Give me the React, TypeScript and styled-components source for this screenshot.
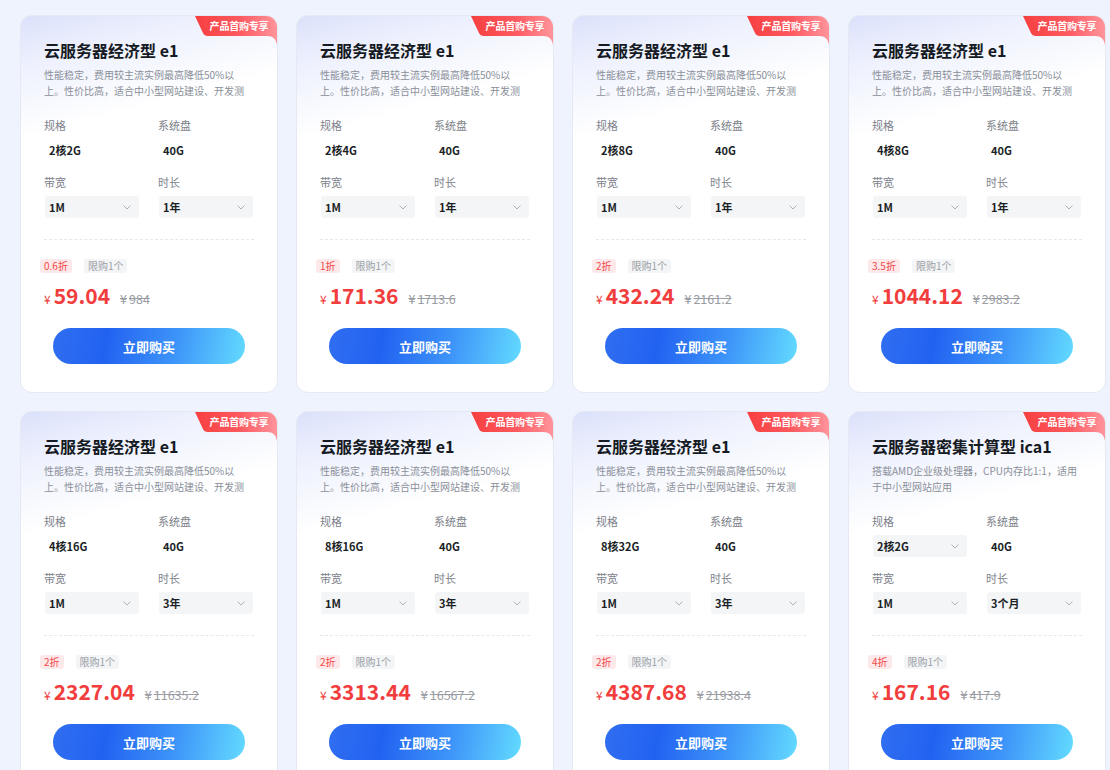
import React from "react";
import styled, { createGlobalStyle } from "styled-components";

const GlobalStyle = createGlobalStyle`
  html, body { margin: 0; padding: 0; }
  body {
    background: #eef3fd;
    font-family: "Noto Sans CJK SC", "Noto Sans", sans-serif;
    -webkit-font-smoothing: antialiased;
  }
`;

type Product = {
  title: string;
  desc: string;
  spec: string;
  specSelect?: boolean;
  disk: string;
  bw: string;
  dur: string;
  discount: string;
  price: string;
  orig: string;
};

const E1_DESC =
  "性能稳定，费用较主流实例最高降低50%以上。性价比高，适合中小型网站建设、开发测";

const products: Product[] = [
  { title: "云服务器经济型 e1", desc: E1_DESC, spec: "2核2G", disk: "40G", bw: "1M", dur: "1年", discount: "0.6折", price: "59.04", orig: "984" },
  { title: "云服务器经济型 e1", desc: E1_DESC, spec: "2核4G", disk: "40G", bw: "1M", dur: "1年", discount: "1折", price: "171.36", orig: "1713.6" },
  { title: "云服务器经济型 e1", desc: E1_DESC, spec: "2核8G", disk: "40G", bw: "1M", dur: "1年", discount: "2折", price: "432.24", orig: "2161.2" },
  { title: "云服务器经济型 e1", desc: E1_DESC, spec: "4核8G", disk: "40G", bw: "1M", dur: "1年", discount: "3.5折", price: "1044.12", orig: "2983.2" },
  { title: "云服务器经济型 e1", desc: E1_DESC, spec: "4核16G", disk: "40G", bw: "1M", dur: "3年", discount: "2折", price: "2327.04", orig: "11635.2" },
  { title: "云服务器经济型 e1", desc: E1_DESC, spec: "8核16G", disk: "40G", bw: "1M", dur: "3年", discount: "2折", price: "3313.44", orig: "16567.2" },
  { title: "云服务器经济型 e1", desc: E1_DESC, spec: "8核32G", disk: "40G", bw: "1M", dur: "3年", discount: "2折", price: "4387.68", orig: "21938.4" },
  {
    title: "云服务器密集计算型 ica1",
    desc: "搭载AMD企业级处理器，CPU内存比1:1，适用于中小型网站应用",
    spec: "2核2G",
    specSelect: true,
    disk: "40G",
    bw: "1M",
    dur: "3个月",
    discount: "4折",
    price: "167.16",
    orig: "417.9",
  },
];

const Page = styled.div`
  padding: 15px 0 0 20px;
  display: grid;
  grid-template-columns: repeat(4, 258px);
  column-gap: 18px;
  row-gap: 18px;
`;

const Card = styled.div`
  position: relative;
  overflow: hidden;
  box-sizing: border-box;
  border: 1px solid #e4e9f3;
  border-radius: 12px;
  background: linear-gradient(165deg, #dbe1fb 0px, #eef1fd 50px, #ffffff 120px);
  padding: 23px 23px 28px 23px;
  display: flex;
  flex-direction: column;
`;

const Badge = styled.div`
  position: absolute;
  top: 0;
  right: 0;
  width: 82px;
  height: 29px;
`;

const BadgeText = styled.span`
  position: absolute;
  top: 0;
  left: 6px;
  right: 0;
  height: 20px;
  line-height: 20px;
  text-align: center;
  color: #fff;
  font-size: 10px;
  font-weight: 700;
  letter-spacing: -0.2px;
`;

const Title = styled.div`
  font-size: 16px;
  line-height: 22px;
  font-weight: 700;
  color: #151a23;
  white-space: nowrap;
`;

const Desc = styled.div`
  margin-top: 6px;
  width: 208px;
  font-size: 10px;
  line-height: 16px;
  height: 32px;
  color: #8a8f99;
`;

const SpecGrid = styled.div`
  margin-top: 18px;
  display: grid;
  grid-template-columns: 95px 95px;
  column-gap: 19px;
  row-gap: 13px;
`;

const Field = styled.div`
  display: flex;
  flex-direction: column;
  gap: 6px;
`;

const Label = styled.div`
  font-size: 11px;
  line-height: 16px;
  color: #7d818a;
`;

const ValueBox = styled.div<{ $select?: boolean }>`
  height: 22px;
  box-sizing: border-box;
  margin-left: 1px;
  padding: 0 8px 0 4px;
  display: flex;
  align-items: center;
  justify-content: space-between;
  border-radius: 3px;
  background: ${(p) => (p.$select ? "#f3f5f6" : "transparent")};
  font-size: 11px;
  font-weight: 700;
  color: #1c1f26;
`;

const Chevron = styled.svg`
  width: 8px;
  height: 5px;
  flex: none;
`;

const Divider = styled.div`
  margin-top: 21px;
  border-top: 1px dashed #e6e8ec;
`;

const TagRow = styled.div`
  margin-top: 19px;
  margin-left: -4px;
  display: flex;
  gap: 12px;
`;

const Tag = styled.span<{ $tone: "red" | "gray" }>`
  height: 14px;
  line-height: 14px;
  padding: 0 4px;
  border-radius: 3px;
  font-size: 10px;
  background: ${(p) => (p.$tone === "red" ? "#fee9ea" : "#f4f5f7")};
  color: ${(p) => (p.$tone === "red" ? "#f04848" : "#9a9da3")};
`;

const PriceRow = styled.div`
  margin-top: 8px;
  height: 28px;
  display: flex;
  align-items: baseline;
  gap: 10px;
`;

const Price = styled.span`
  color: #f23d3d;
  font-weight: 700;
  font-size: 21px;
  line-height: 28px;
  white-space: nowrap;
`;

const Yen = styled.span`
  font-size: 12px;
  font-weight: 400;
  margin-right: 3px;
`;

const Orig = styled.span`
  color: #9a9da3;
  font-size: 12.5px;
  text-decoration: line-through;
  white-space: nowrap;
`;

const OrigYen = styled.span`
  margin-right: 2px;
`;

const BuyButton = styled.button`
  margin: 19px auto 0;
  width: 192px;
  height: 36px;
  border: none;
  border-radius: 18px;
  background: linear-gradient(100deg, #306ef0 0%, #2262f1 28%, #3f97f9 65%, #63dbff 100%);
  color: #fff;
  font-family: inherit;
  font-size: 13px;
  font-weight: 700;
  cursor: pointer;
`;

function ChevronIcon() {
  return (
    <Chevron viewBox="0 0 8 5">
      <path d="M0.5 0.5 L4 4 L7.5 0.5" fill="none" stroke="#a7abb2" strokeWidth="0.9" />
    </Chevron>
  );
}

function BadgeShape({ id }: { id: string }) {
  return (
    <svg width="82" height="29" viewBox="0 0 82 29" style={{ position: "absolute", inset: 0 }}>
      <defs>
        <linearGradient id={id} x1="0" y1="0" x2="1" y2="0">
          <stop offset="0" stopColor="#f73f3f" />
          <stop offset="0.55" stopColor="#fd5a60" />
          <stop offset="1" stopColor="#ff949c" />
        </linearGradient>
      </defs>
      <path
        d="M0 0 H82 V29 C81 23 78 20 72 20 H13 C10 20 8.5 18.5 7.5 16 Z"
        fill={`url(#${id})`}
      />
    </svg>
  );
}

function ProductCard({ p, i }: { p: Product; i: number }) {
  return (
    <Card>
      <Badge>
        <BadgeShape id={`badge-grad-${i}`} />
        <BadgeText>产品首购专享</BadgeText>
      </Badge>
      <Title>{p.title}</Title>
      <Desc>{p.desc}</Desc>
      <SpecGrid>
        <Field>
          <Label>规格</Label>
          <ValueBox $select={p.specSelect}>
            {p.spec}
            {p.specSelect && <ChevronIcon />}
          </ValueBox>
        </Field>
        <Field>
          <Label>系统盘</Label>
          <ValueBox>{p.disk}</ValueBox>
        </Field>
        <Field>
          <Label>带宽</Label>
          <ValueBox $select>
            {p.bw}
            <ChevronIcon />
          </ValueBox>
        </Field>
        <Field>
          <Label>时长</Label>
          <ValueBox $select>
            {p.dur}
            <ChevronIcon />
          </ValueBox>
        </Field>
      </SpecGrid>
      <Divider />
      <TagRow>
        <Tag $tone="red">{p.discount}</Tag>
        <Tag $tone="gray">限购1个</Tag>
      </TagRow>
      <PriceRow>
        <Price>
          <Yen>¥</Yen>
          {p.price}
        </Price>
        <Orig>
          <OrigYen>¥</OrigYen>
          {p.orig}
        </Orig>
      </PriceRow>
      <BuyButton>立即购买</BuyButton>
    </Card>
  );
}

export default function App() {
  return (
    <>
      <GlobalStyle />
      <Page>
        {products.map((p, i) => (
          <ProductCard key={i} p={p} i={i} />
        ))}
      </Page>
    </>
  );
}
